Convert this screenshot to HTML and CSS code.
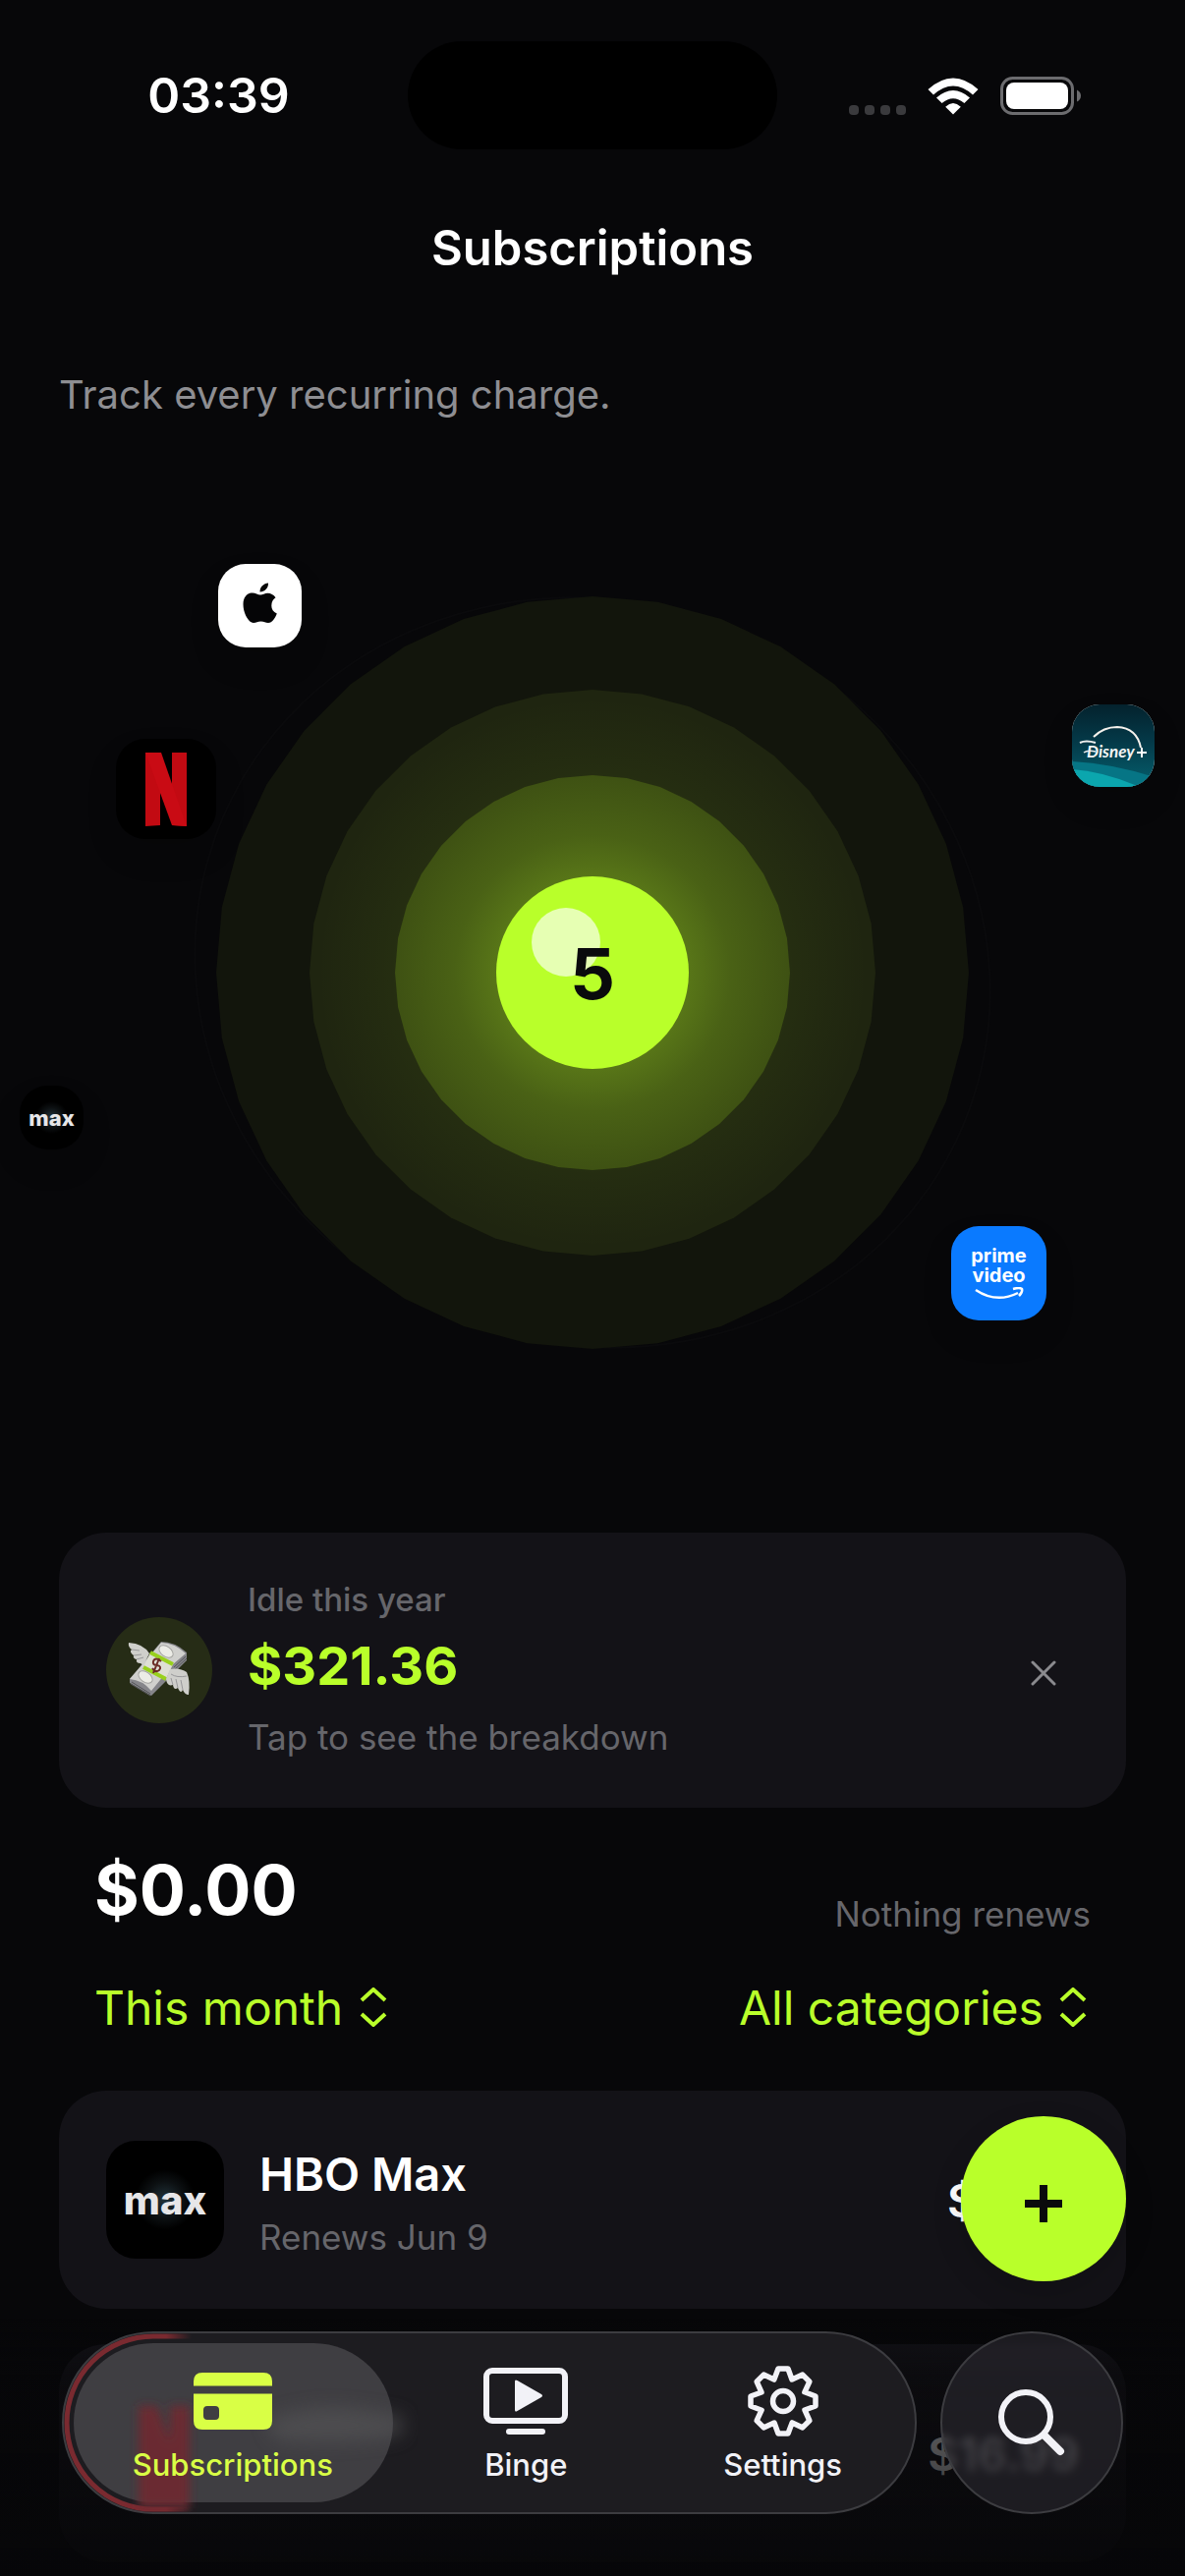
FILE: index.html
```
<!DOCTYPE html>
<html lang="en">
<head>
  <meta charset="UTF-8">
  <meta name="viewport" content="width=device-width, initial-scale=1">
  <title>Subscriptions</title>
  <link rel="stylesheet" href="styles.css">
</head>
<body>

  <div class="status-bar">
    <time class="clock">03:39</time>
    <div class="island"></div>
    <div class="status-icons">
      <svg width="58" height="10" viewBox="0 0 58 10" fill="#3a3a3d">
        <rect width="10" height="10" rx="4"/>
        <rect x="16" width="10" height="10" rx="4"/>
        <rect x="32" width="10" height="10" rx="4"/>
        <rect x="48" width="10" height="10" rx="4"/>
      </svg>
      <svg class="wifi" width="52" height="38" viewBox="0 0 52 38" fill="#fff">
        <path d="M26 37.500 L18.200 29.700 Q26 22.500 33.800 29.700 Z"/>
        <path d="M9 20.500 Q26 5.500 43 20.500 L37.400 26.100 Q26 16.300 14.600 26.100 Z"/>
        <path d="M.5 12 Q26 -11 51.500 12 L46 17.500 Q26 -.5 6 17.500 Z"/>
      </svg>
      <svg width="82" height="39" viewBox="0 0 82 39">
        <rect x="1.500" y="1.500" width="72" height="36" rx="11" fill="none" stroke="#6c6c6f" stroke-width="3"/>
        <rect x="6" y="6" width="63" height="27" rx="8" fill="#fff"/>
        <path d="M78 13.500 Q82 15.500 82 19.500 Q82 23.500 78 25.500 Z" fill="#6c6c6f"/>
      </svg>
    </div>
  </div>

  <header>
    <h1>Subscriptions</h1>
    <p class="tagline">Track every recurring charge.</p>
  </header>

  <main>
    <!-- Orbit: services floating around the total -->
    <section class="orbit">
      <svg class="rings" width="840" height="840" viewBox="-420 -420 840 840">
        <defs>
          <polygon id="ring" points="100,0 98.480,17.360 93.970,34.200 86.600,50 76.600,64.280 64.280,76.600 50,86.600 34.200,93.970 17.360,98.480 0,100 -17.360,98.480 -34.200,93.970 -50,86.600 -64.280,76.600 -76.600,64.280 -86.600,50 -93.970,34.200 -98.480,17.360 -100,0 -98.480,-17.360 -93.970,-34.200 -86.600,-50 -76.600,-64.280 -64.280,-76.600 -50,-86.600 -34.200,-93.970 -17.360,-98.480 0,-100 17.360,-98.480 34.200,-93.970 50,-86.600 64.280,-76.600 76.600,-64.280 86.600,-50 93.970,-34.200 98.480,-17.360"/>
          <radialGradient id="glow" gradientUnits="userSpaceOnUse" cx="0" cy="0" r="280">
            <stop offset=".35" stop-color="#b9ff2a" stop-opacity=".24"/>
            <stop offset=".5" stop-color="#b9ff2a" stop-opacity=".13"/>
            <stop offset=".72" stop-color="#b9ff2a" stop-opacity=".04"/>
            <stop offset="1" stop-color="#b9ff2a" stop-opacity="0"/>
          </radialGradient>
        </defs>
        <ellipse rx="408" ry="378" transform="rotate(20)" fill="none" stroke="#0a0a0c" stroke-width="2"/>
        <use href="#ring" transform="scale(3.830)" fill="#12150c"/>
        <use href="#ring" transform="scale(2.880)" fill="#1f2510"/>
        <use href="#ring" transform="scale(2.010)" fill="#394a12"/>
        <circle r="280" fill="url(#glow)"/>
        <circle r="98" fill="#b9ff2a"/>
        <circle cx="-27" cy="-31" r="35" fill="#e6ffb3"/>
      </svg>
      <strong class="count">5</strong>

      <button class="planet apple" aria-label="Apple">
        <svg width="38" height="44" viewBox="0 0 38 44" fill="#050506">
          <path d="M19 12.500 C16.500 12.500 14 10.500 11 10.500 C5.500 10.500 1.500 15 1.500 22 C1.500 31 7 41 12 41 C15 41 16 39.500 19.500 39.500 C23 39.500 24 41 27 41 C31 41 34 36 35.800 31.500 C32 29.800 30.300 27 30.300 23.500 C30.300 19.500 32 17 34.500 15.300 C32.500 12.300 29.500 10.700 26.500 10.700 C23.500 10.700 21 12.500 19 12.500 Z"/>
          <path d="M18.500 9.500 C18.300 4.500 22.300 .8 27 .5 C27.400 5.300 23.300 9.500 18.500 9.500 Z"/>
        </svg>
      </button>
      <button class="planet netflix" aria-label="Netflix">
        <svg width="42" height="75" viewBox="0 0 42 75">
          <path d="M0 0 H15 V74 L0 75 Z M27 0 H42 V75 L27 74 Z" fill="#c20a12"/>
          <path d="M0 0 H16 L42 75 L27 74 Z" fill="#c90b14"/>
        </svg>
      </button>
      <button class="planet max" aria-label="HBO Max"><span>max</span></button>
      <button class="planet disney" aria-label="Disney+">
        <svg width="84" height="84" viewBox="0 0 84 84">
          <defs>
            <linearGradient id="sky" x1="0" y1="0" x2="0" y2="1">
              <stop offset="0" stop-color="#04222d"/>
              <stop offset=".45" stop-color="#043948"/>
              <stop offset="1" stop-color="#05606e"/>
            </linearGradient>
          </defs>
          <rect width="84" height="84" fill="url(#sky)"/>
          <path d="M0 58 Q40 60 84 74 V84 H0 Z" fill="#067585"/>
          <path d="M0 66 Q30 68 64 82 L66 84 H0 Z" fill="#0ba6ae"/>
          <path d="M22 33 Q32 23 46 23 Q66 24 70 44" fill="none" stroke="#f4f1ec" stroke-width="2"/>
          <path d="M8 39 Q14 36 24 39" fill="none" stroke="#eee" stroke-width="2"/>
          <path d="M12 49 Q16 46 24 48" fill="none" stroke="#eee" stroke-width="1.500"/>
          <text x="15" y="54" class="disney-name">Disney</text>
          <path d="M66 49 H76 M71 44 V54" stroke="#fff" stroke-width="2"/>
        </svg>
      </button>
      <button class="planet prime" aria-label="Prime Video">
        <span>prime<br>video</span>
        <svg width="50" height="14" viewBox="0 0 50 14" fill="none" stroke="#fff" stroke-width="2.500">
          <path d="M1 3 Q22 17 44 6"/>
          <path d="M39 2 Q46 0 48 2 Q49 5 45 9"/>
        </svg>
      </button>
    </section>

    <section class="card idle">
      <div class="badge">
        <svg width="64" height="58" viewBox="0 0 64 58">
          <path d="M2 38 L34 0 Q48 0 60 11 V19 L24 55 L2 42 Z" fill="#85858a"/>
          <path d="M2 38 L34 1 Q47 1 59 12 L46 23 L24 50 Q15 39 2 38 Z" fill="#d0d0cd"/>
          <path d="M4 41 L23 53 M3 43 L23 55 M47 26 L59 15 M47 29 L60 17" stroke="#55555a" stroke-width="1"/>
          <ellipse cx="39" cy="10" rx="8" ry="5" transform="rotate(35 39 10)" fill="#ecece6" stroke="#a3a3a0"/>
          <ellipse cx="18" cy="36" rx="8" ry="5" transform="rotate(35 18 36)" fill="#ecece6" stroke="#a3a3a0"/>
          <path d="M23 11 L46 23 L39 38 L16 26 Z" fill="#dedfd4"/>
          <path d="M23 11 L46 23 M16 26 L39 38" stroke="#98d01c" stroke-width="4"/>
          <path d="M34 20 Q28 15 26 20 Q25 24 30 24 Q35 25 32 29 Q28 32 25 27 M32 17 L26 32" fill="none" stroke="#6b2b25" stroke-width="2"/>
          <path d="M22 12 Q16 2 1 1 Q0 5 4 8 Q1 10 6 14 Q5 17 9 18 Q8 22 13 22 L16 24 Z" fill="#cfcfcb"/>
          <path d="M4 8 L12 9 M6 14 L14 13 M9 18 L16 16" stroke="#98989a" stroke-width="1" fill="none"/>
          <path d="M43 28 Q53 26 60 31 Q64 40 62 54 Q58 54 56 49 Q54 54 51 47 Q47 50 46 44 Q40 46 39 38 Z" fill="#cfcfcb"/>
          <path d="M56 49 L54 39 M51 47 L49 38 M46 44 L44 37 M44 33 Q50 37 60 35" stroke="#98989a" stroke-width="1" fill="none"/>
        </svg>
      </div>
      <div class="idle-text">
        <p class="label">Idle this year</p>
        <p class="saved">$321.36</p>
        <p class="hint">Tap to see the breakdown</p>
      </div>
      <button class="close" aria-label="Dismiss">
        <svg width="26" height="26" viewBox="0 0 26 26" stroke="#8a8a8e" stroke-width="3" stroke-linecap="round">
          <path d="M2 2 L24 24 M24 2 L2 24"/>
        </svg>
      </button>
    </section>

    <section class="summary">
      <strong class="total">$0.00</strong>
      <span class="hint">Nothing renews</span>
    </section>

    <section class="filters">
      <label class="filter">
        <select aria-label="Period">
          <option>This month</option>
          <option>This year</option>
        </select>
        <svg width="28" height="40" viewBox="0 0 28 40"><path d="M2 13 L14 2 L26 13 M2 27 L14 38 L26 27"/></svg>
      </label>
      <label class="filter">
        <select aria-label="Category">
          <option>All categories</option>
          <option>Streaming</option>
        </select>
        <svg width="28" height="40" viewBox="0 0 28 40"><path d="M2 13 L14 2 L26 13 M2 27 L14 38 L26 27"/></svg>
      </label>
    </section>

    <section class="list">
      <article class="card row">
        <div class="logo max"><span>max</span></div>
        <div class="row-text">
          <h2>HBO Max</h2>
          <p class="hint">Renews Jun 9</p>
        </div>
        <strong class="price">$9.99</strong>
      </article>
      <article class="card row">
        <div class="logo"></div>
        <div class="row-text"></div>
        <strong class="price">$16.99</strong>
      </article>
    </section>
  </main>

  <div class="fade"></div>

  <button class="add" aria-label="Add subscription">
    <svg width="38" height="38" viewBox="0 0 38 38" stroke="#0a0a0c" stroke-width="8">
      <path d="M0 19 H38 M19 0 V38"/>
    </svg>
  </button>

  <div class="dock">
    <nav class="tabs">
      <!-- glass reflections of the row underneath -->
      <svg class="glass" width="360" height="182" viewBox="0 0 360 182">
        <defs>
          <filter id="soft" x="-30%" y="-30%" width="160%" height="160%"><feGaussianBlur stdDeviation="5"/></filter>
          <filter id="softer" x="-30%" y="-60%" width="160%" height="220%"><feGaussianBlur stdDeviation="9"/></filter>
          <linearGradient id="rim" gradientUnits="userSpaceOnUse" x1="0" y1="0" x2="130" y2="0">
            <stop offset="0" stop-color="#7a2a30"/>
            <stop offset=".8" stop-color="#7a2a30"/>
            <stop offset="1" stop-color="#7a2a30" stop-opacity="0"/>
          </linearGradient>
        </defs>
        <rect class="lens" x="10" y="10" width="325" height="162" rx="81"/>
        <path d="M130 3 H91 A88 88 0 0 0 91 179 H130" fill="none" stroke="url(#rim)" stroke-width="5"/>
        <path d="M76 74 H95 L108 110 V74 H128 V178 H76 Z" fill="#6b2a30" filter="url(#soft)"/>
        <path d="M205 88 Q250 72 290 76 L346 84 L344 104 Q280 116 215 108 Z" fill="#5a5a5c" opacity=".5" filter="url(#softer)"/>
      </svg>
      <a href="#subscriptions" class="tab active">
        <svg width="80" height="74" viewBox="0 0 80 74">
          <path d="M9 8 H71 Q80 8 80 17 V21.500 H0 V17 Q0 8 9 8 Z" fill="#d9ff45"/>
          <path fill-rule="evenodd" d="M0 29.500 H80 V57 Q80 66 71 66 H9 Q0 66 0 57 Z M14 42 Q10 42 10 46 V52 Q10 56 14 56 H22 Q26 56 26 52 V46 Q26 42 22 42 Z" fill="#d9ff45"/>
        </svg>
        <span>Subscriptions</span>
      </a>
      <a href="#binge" class="tab">
        <svg width="86" height="74" viewBox="0 0 86 74">
          <rect x="3" y="6" width="80" height="51" rx="6" fill="none" stroke="#f2f2f7" stroke-width="6"/>
          <path d="M32 17 V46 Q32 48.500 34.500 47 L59 33 Q61 31.500 59 30 L34.500 16 Q32 14.500 32 17 Z" fill="#f2f2f7"/>
          <path d="M26 68 H60" stroke="#f2f2f7" stroke-width="6" stroke-linecap="round"/>
        </svg>
        <span>Binge</span>
      </a>
      <a href="#settings" class="tab">
        <svg width="74" height="74" viewBox="-37 -37 74 74" fill="none" stroke="#f2f2f7" stroke-width="5.500" stroke-linejoin="round">
          <path d="M-5 -33 L5 -33 L9 -22 L19.800 -26.900 L26.900 -19.800 L21.900 -9.200 L33 -5 L33 5 L22 9 L26.900 19.800 L19.800 26.900 L9.200 21.900 L5 33 L-5 33 L-9 22 L-19.800 26.900 L-26.900 19.800 L-21.900 9.200 L-33 5 L-33 -5 L-22 -9 L-26.900 -19.800 L-19.800 -26.900 L-9.200 -21.900 Z"/>
          <circle r="10.500"/>
        </svg>
        <span>Settings</span>
      </a>
    </nav>
    <button class="search" aria-label="Search">
      <svg width="70" height="70" viewBox="0 0 70 70" fill="none" stroke="#f2f2f7" stroke-linecap="round">
        <circle cx="29" cy="29" r="25" stroke-width="6"/>
        <path d="M48 48 L64 64" stroke-width="8"/>
      </svg>
    </button>
  </div>

</body>
</html>
```
FILE: styles.css
```
* {
  box-sizing: border-box;
}

body {
  margin: 0;
  background: #070709;
  color: #fff;
  font-family: Inter, 'Liberation Sans', sans-serif;
}

h1, h2, p {
  margin: 0;
}

button {
  border: none;
  padding: 0;
  cursor: pointer;
  font-family: inherit;
}

svg {
  display: block;
  flex-shrink: 0;
}

/* status bar */
.status-bar {
  display: grid;
  grid-template-columns: 1fr 376px 1fr;
  align-items: center;
  padding-top: 42px;
}

.clock {
  padding-left: 30px;
  font-size: 50px;
  font-weight: 600;
  text-align: center;
}

.island {
  height: 110px;
  border-radius: 55px;
  background: #000;
}

.status-icons {
  display: flex;
  align-items: flex-end;
  justify-content: flex-end;
  gap: 22px;
  padding-right: 106px;
}

/* header */
header {
  padding: 71px 60px 0;
}

h1 {
  font-size: 49px;
  font-weight: 600;
  line-height: 60px;
  text-align: center;
}

.tagline {
  margin-top: 95px;
  font-size: 40px;
  line-height: 48px;
  color: #8e8e92;
}

main {
  padding: 24px 60px 0;
}

/* orbit */
.orbit {
  position: relative;
  display: grid;
  place-items: center;
  height: 1080px;
  margin: 0 -60px 30px;
}

.rings, .count {
  grid-area: 1 / 1;
}

.count {
  z-index: 1;
  font-size: 72px;
  font-weight: 700;
  color: #0a0a0c;
}

.planet {
  position: absolute;
  display: flex;
  flex-direction: column;
  align-items: center;
  justify-content: center;
  overflow: hidden;
  color: #fff;
  box-shadow: 0 16px 30px rgba(0, 0, 0, 0.15);
}

.planet.apple {
  top: 124px;
  left: calc(50% - 381px);
  width: 85px;
  height: 85px;
  padding-bottom: 4px;
  border-radius: 28px;
  background: #fff;
}

.planet.netflix {
  top: 302px;
  left: calc(50% - 485px);
  width: 102px;
  height: 102px;
  border-radius: 30px;
  background: #000;
}

.planet.max {
  top: 655px;
  left: calc(50% - 583px);
  width: 65px;
  height: 65px;
  border-radius: 28px;
  font-size: 22px;
}

.planet.disney {
  top: 267px;
  left: calc(50% + 488px);
  width: 84px;
  height: 84px;
  border-radius: 28px;
}

.disney-name {
  font-family: Lato, sans-serif;
  font-size: 17px;
  font-weight: 700;
  font-style: italic;
  fill: #f4f4f4;
}

.planet.prime {
  top: 798px;
  left: calc(50% + 365px);
  width: 97px;
  height: 96px;
  border-radius: 28px;
  background: #0a7aff;
  font-size: 20px;
  font-weight: 700;
  line-height: 20px;
}

.prime svg {
  margin-top: 2px;
}

.max {
  background: radial-gradient(circle, #22343c 0%, #0c1012 22%, #000 36%);
  color: #e6e6e8;
  font-weight: 800;
}

/* cards */
.card {
  display: flex;
  align-items: center;
  padding: 48px;
  border-radius: 48px;
  background: #131217;
}

.hint {
  font-size: 35px;
  line-height: 48px;
  color: #66666b;
}

.idle {
  gap: 36px;
}

.badge {
  display: grid;
  place-items: center;
  width: 108px;
  height: 108px;
  border-radius: 50%;
  background: #262c16;
}

.idle-text {
  flex: 1;
}

.label {
  font-size: 33px;
  font-weight: 500;
  line-height: 40px;
  color: #66666b;
}

.saved {
  margin: 14px 0;
  font-size: 54px;
  font-weight: 700;
  line-height: 68px;
  color: #b9ff2a;
}

.close {
  display: grid;
  place-items: center;
  width: 72px;
  height: 72px;
  padding-top: 6px;
  background: none;
}

/* totals */
.summary {
  display: flex;
  align-items: flex-end;
  justify-content: space-between;
  padding: 0 36px;
  margin-top: 36px;
}

.total {
  font-size: 70px;
  font-weight: 700;
  line-height: 96px;
}

.filters {
  display: flex;
  justify-content: space-between;
  padding: 0 40px 0 36px;
  margin: 41px 0 55px;
}

.filter {
  display: flex;
  align-items: center;
  gap: 16px;
}

.filter select {
  appearance: none;
  height: 60px;
  padding: 0;
  border: none;
  background: none;
  color: #b9ff2a;
  font-family: inherit;
  font-size: 48px;
}

.filter path {
  fill: none;
  stroke: #b9ff2a;
  stroke-width: 4;
}

/* list */
.list {
  display: grid;
  gap: 36px;
}

.row {
  gap: 36px;
  height: 222px;
}

.logo {
  display: grid;
  place-items: center;
  width: 120px;
  height: 120px;
  border-radius: 30px;
  font-size: 40px;
}

.row-text {
  flex: 1;
}

h2 {
  font-size: 47px;
  font-weight: 600;
  line-height: 64px;
}

.row .hint {
  margin-top: 12px;
  line-height: 40px;
}

.price {
  font-size: 47px;
  font-weight: 600;
}

.fade {
  position: fixed;
  left: 0;
  right: 0;
  bottom: 0;
  height: 262px;
  background: linear-gradient(rgba(7, 7, 9, 0), rgba(7, 7, 9, 0.6) 60px, rgba(7, 7, 9, 0.9));
}

/* floating controls */
.add {
  position: fixed;
  right: 60px;
  bottom: 300px;
  display: grid;
  place-items: center;
  width: 168px;
  height: 168px;
  padding-top: 10px;
  border-radius: 50%;
  background: #b9ff2a;
  box-shadow: 0 12px 30px rgba(0, 0, 0, 0.15);
}

.dock {
  position: fixed;
  left: 63px;
  right: 63px;
  bottom: 63px;
  display: flex;
  gap: 24px;
  height: 186px;
}

.tabs {
  position: relative;
  flex: 1;
  display: flex;
  padding: 10px;
  border: 2px solid #3c3c40;
  border-radius: 93px;
  background: #1d1c20;
}

.glass {
  position: absolute;
  top: 0;
  left: 0;
}

.lens {
  fill: #3f3e42;
}

.tab {
  position: relative;
  flex: 10;
  display: flex;
  flex-direction: column;
  align-items: center;
  gap: 8px;
  padding-top: 22px;
  color: #f2f2f7;
  font-size: 31px;
  font-weight: 500;
  line-height: 40px;
  text-decoration: none;
}

.tab.active {
  flex: 13;
  color: #d9ff45;
}

.tab:nth-of-type(2) {
  flex: 11;
}

.search {
  display: grid;
  place-items: center;
  width: 186px;
  border: 2px solid #3c3c40;
  border-radius: 50%;
  background: rgba(50, 48, 56, 0.5);
  backdrop-filter: blur(4px);
}
```
